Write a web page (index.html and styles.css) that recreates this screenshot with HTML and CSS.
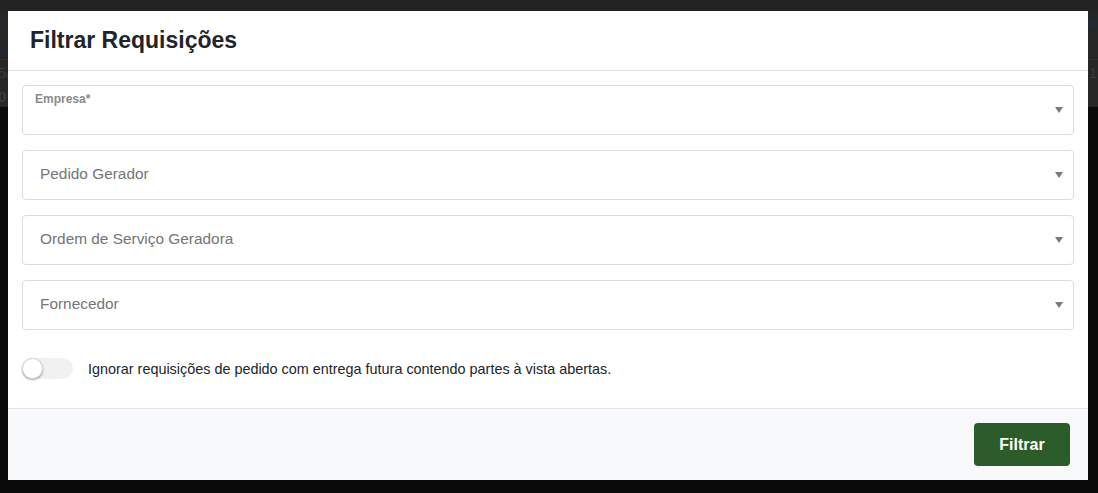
FILE: index.html
```html
<!DOCTYPE html>
<html lang="pt-BR">
<head>
<meta charset="utf-8">
<title>Filtrar Requisições</title>
<link rel="stylesheet" href="styles.css">
</head>
<body>
<div class="backdrop">
  <div class="bg-top"></div>
  <div class="bg-band">
    <div class="bg-row"><span class="bg-l blue">r</span><span class="bg-r blue">o</span></div>
    <div class="bg-row"><span class="bg-l blue">o</span><span class="bg-r"></span></div>
    <div class="bg-row2"><span class="bg-l">5/</span><span class="bg-r">1</span></div>
    <div class="bg-row"><span class="bg-l">0:</span><span class="bg-r"></span></div>
  </div>
</div>
<div class="modal">
  <div class="modal-header">
    <h1 class="modal-title">Filtrar Requisições</h1>
  </div>
  <div class="modal-body">
    <div class="select labeled">
      <span class="label">Empresa*</span>
      <span class="arrow"></span>
    </div>
    <div class="select">
      <span class="placeholder">Pedido Gerador</span>
      <span class="arrow"></span>
    </div>
    <div class="select">
      <span class="placeholder">Ordem de Serviço Geradora</span>
      <span class="arrow"></span>
    </div>
    <div class="select">
      <span class="placeholder">Fornecedor</span>
      <span class="arrow"></span>
    </div>
    <div class="toggle-row">
      <span class="toggle"><span class="knob"></span></span>
      <span class="toggle-text">Ignorar requisições de pedido com entrega futura contendo partes à vista abertas.</span>
    </div>
  </div>
  <div class="modal-footer">
    <button class="btn">Filtrar</button>
  </div>
</div>
</body>
</html>
```

FILE: styles.css
```css
html, body {
  margin: 0;
  padding: 0;
}
body {
  width: 1098px;
  height: 493px;
  background: #0a0a0a;
  font-family: "Liberation Sans", Arial, sans-serif;
  position: relative;
  overflow: hidden;
  padding-top: 11px;
  padding-left: 8px;
  box-sizing: border-box;
}
.backdrop {
  position: absolute;
  left: 0;
  top: 0;
  width: 1098px;
  z-index: 0;
}
.bg-top {
  height: 11px;
  background: #232323;
}
.bg-band {
  background: #262626;
  height: 96px;
  color: #3a3a3a;
  font-size: 15px;
  font-weight: bold;
}
.bg-row, .bg-row2 {
  height: 24px;
  display: flex;
  justify-content: space-between;
  align-items: center;
}
.bg-row2 {
  border-top: 1px solid #2f2f2f;
  font-weight: normal;
}
.bg-l { margin-left: -2px; }
.bg-r { margin-right: 1px; }
.blue { color: #1f2a3a; }
.modal {
  position: relative;
  z-index: 1;
  width: 1080px;
  height: 469px;
  background: #fff;
  display: flex;
  flex-direction: column;
}
.modal-header {
  height: 60px;
  border-bottom: 1px solid #dee2e6;
  display: flex;
  align-items: center;
  padding-left: 22px;
  box-sizing: border-box;
}
.modal-title {
  margin: 0;
  font-size: 23px;
  font-weight: bold;
  color: #212529;
}
.modal-body {
  padding: 14px 14px 0 14px;
  display: flex;
  flex-direction: column;
  gap: 15px;
  flex: 1;
}
.select {
  height: 50px;
  border: 1px solid #dcdcdc;
  border-radius: 4px;
  box-sizing: border-box;
  position: relative;
  display: flex;
  align-items: center;
  padding-left: 17px;
  padding-bottom: 2px;
}
.placeholder {
  font-size: 15.4px;
  color: #757575;
}
.labeled {
  align-items: flex-start;
  padding-left: 12px;
  padding-top: 6px;
}
.label {
  font-size: 12px;
  font-weight: bold;
  color: #8a8a8a;
}
.arrow {
  position: absolute;
  right: 10px;
  top: 21px;
  width: 0;
  height: 0;
  border-left: 4px solid transparent;
  border-right: 4px solid transparent;
  border-top: 6px solid #7a7a7a;
}
.toggle-row {
  display: flex;
  align-items: center;
  margin-top: 12px;
  height: 22px;
}
.toggle {
  width: 51px;
  height: 21px;
  border-radius: 11px;
  background: #f1f1f1;
  position: relative;
  flex: none;
}
.knob {
  position: absolute;
  left: 0;
  top: 0;
  width: 21px;
  height: 21px;
  border-radius: 50%;
  background: #fff;
  box-shadow: 0 1px 2px rgba(0,0,0,0.35);
  box-sizing: border-box;
  border: 1px solid #d6d6d6;
}
.toggle-text {
  margin-left: 15px;
  font-size: 14.4px;
  color: #212529;
  padding-top: 1px;
}
.modal-footer {
  height: 72px;
  border-top: 1px solid #dee2e6;
  background: #f8f9fa;
  display: flex;
  align-items: center;
  justify-content: flex-end;
  padding-right: 18px;
  box-sizing: border-box;
}
.btn {
  width: 96px;
  height: 43px;
  border: none;
  border-radius: 4px;
  background: #2b5c2a;
  color: #fff;
  font-family: "Liberation Sans", Arial, sans-serif;
  font-size: 16px;
  font-weight: bold;
  padding: 0;
}
```
